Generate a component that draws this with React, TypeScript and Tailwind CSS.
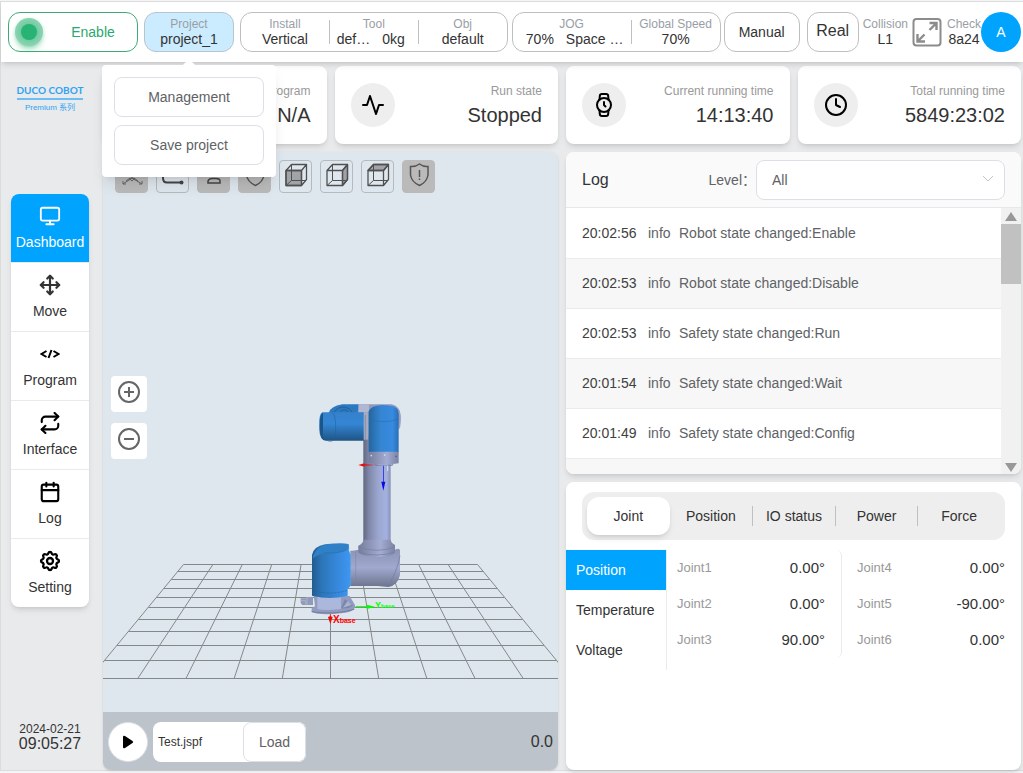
import { useState } from 'react';
import type { ReactNode } from 'react';
import { FiActivity, FiCalendar, FiClock, FiMonitor, FiMove, FiRepeat, FiWatch } from 'react-icons/fi';
import { TbSettings } from 'react-icons/tb';

const navItems = [
  { name: 'Dashboard', icon: <FiMonitor size={22} /> },
  { name: 'Move', icon: <FiMove size={22} color="#333" strokeWidth={2.4} /> },
  { name: 'Program', icon: <CodeIcon /> },
  { name: 'Interface', icon: <FiRepeat size={22} color="#000" strokeWidth={2.3} /> },
  { name: 'Log', icon: <FiCalendar size={22} color="#000" strokeWidth={2.3} /> },
  { name: 'Setting', icon: <TbSettings size={24} color="#000" strokeWidth={2.3} /> },
];

const logs = [
  { time: '20:02:56', level: 'info', message: 'Robot state changed:Enable' },
  { time: '20:02:53', level: 'info', message: 'Robot state changed:Disable' },
  { time: '20:02:53', level: 'info', message: 'Safety state changed:Run' },
  { time: '20:01:54', level: 'info', message: 'Safety state changed:Wait' },
  { time: '20:01:49', level: 'info', message: 'Safety state changed:Config' },
  { time: '', level: '', message: '' },
];

const tabs = ['Joint', 'Position', 'IO status', 'Power', 'Force'];
const metrics = ['Position', 'Temperature', 'Voltage'];

const jointColumns = [
  [
    ['Joint1', '0.00°'],
    ['Joint2', '0.00°'],
    ['Joint3', '90.00°'],
  ],
  [
    ['Joint4', '0.00°'],
    ['Joint5', '-90.00°'],
    ['Joint6', '0.00°'],
  ],
];

// perspective floor grid
const gridRows = [564, 571, 579, 588, 597, 607, 619, 631, 645, 660, 678];
const gridCols = [-5, -4, -3, -2, -1, 0, 1, 2, 3, 4, 5];

function CodeIcon() {
  return (
    <svg width="20" height="20" viewBox="0 0 20 20" fill="none" stroke="#000" strokeWidth="2">
      <path d="M6.500 7 1.500 10 6.500 13M13.500 7 18.500 10 13.500 13M11.500 6 8.500 14" />
    </svg>
  );
}

function ExpandIcon() {
  return (
    <svg width="30" height="30" viewBox="0 0 30 30" fill="none" stroke="#8c8c8c" strokeWidth="2">
      <rect x="1.5" y="2" width="27" height="26.5" rx="3" />
      <path d="M17.500 13 24 6.500M17.500 6H24.500V13M12.500 17.500 6 24M5.500 17V24.500H13" strokeWidth="2.400" />
    </svg>
  );
}

function ShieldIcon({ mark }: { mark?: boolean }) {
  return (
    <svg width="24" height="24" viewBox="0 0 24 24" fill="none" stroke="#555" strokeWidth="1.5">
      <path d="M3.500 3.500Q8.500 4 12.500 1Q16.500 4 21 3.500V12Q20 19 12.500 22.500Q4.500 19 3.500 12Z" />
      {mark && <path d="M12.500 7V14M12.500 15.500V17" />}
    </svg>
  );
}

function CubeIcon({ face }: { face: 'front' | 'right' | 'top' }) {
  return (
    <svg width="24" height="24" viewBox="0 0 24 24" fill="none" stroke="#505050" strokeWidth="1.3" strokeLinejoin="round">
      {face === 'front' && <path d="M2 7.500H17.500V22.500H2Z" fill="#a0a4a8" />}
      {face === 'right' && <path d="M17.500 7.500 22.500 1.500V16.500L17.500 22.500Z" fill="#a0a4a8" />}
      {face === 'top' && <path d="M2 7.500 7.500 1.500H22.500L17.500 7.500Z" fill="#a0a4a8" />}
      <path d="M2 7.500H17.500V22.500H2ZM2 7.500 7.500 1.500H22.500V16.500L17.500 22.500M17.500 7.500 22.500 1.500" />
      <path d="M7.500 1.500V17.500H22M7.500 17.500 2 22.500" strokeWidth="1" />
    </svg>
  );
}

function AxesIcon() {
  return (
    <svg width="24" height="24" viewBox="0 0 24 24" fill="none" stroke="#666" strokeWidth="1">
      <path d="M12 3V15L3 21M12 15 22 21M6 18Q12 12 18 18M9 15 12 18 15 15M3 18V21H6M19 21H22V18" />
    </svg>
  );
}

function PathIcon() {
  return (
    <svg width="24" height="24" viewBox="0 0 24 24" fill="none" stroke="#444" strokeWidth="2">
      <path d="M20 4H6Q2 4 2 8V15Q2 19.500 6 19.500H20" />
      <circle cx="20.500" cy="19.500" r="2" fill="#444" stroke="none" />
    </svg>
  );
}

function LoadIcon() {
  return (
    <svg width="24" height="24" viewBox="0 0 24 24" fill="none" stroke="#444" strokeWidth="1.500">
      <path d="M12 3V13M6 20V18Q7 15.500 10 15.500H14Q18 15.500 18 18V20Z" />
    </svg>
  );
}

function Field({ label, children }: { label: string; children: ReactNode }) {
  return (
    <div className="flex min-w-0 flex-col justify-center text-center">
      <div className="text-xs leading-[15px] whitespace-nowrap text-[#999ea6]">{label}</div>
      <div className="text-sm leading-[15px] whitespace-nowrap text-[#333]">{children}</div>
    </div>
  );
}

function Separator() {
  return <div className="h-6 w-px shrink-0 self-center bg-[#c0c0c0]" />;
}

function StatCard({ icon, label, value }: { icon: ReactNode; label: string; value: string }) {
  return (
    <div className="flex h-[78px] items-center justify-between rounded-lg bg-white px-4 shadow-md">
      <div className="flex size-11 items-center justify-center rounded-full bg-[#eee] text-black">{icon}</div>
      <div className="text-right">
        <div className="text-xs leading-5 text-[#999]">{label}</div>
        <div className="text-xl leading-7 text-[#333]">{value}</div>
      </div>
    </div>
  );
}

function Header() {
  const [open, setOpen] = useState(true);

  return (
    <header className="relative z-10 flex h-[61px] shrink-0 items-center border-t border-[#dcdcdc] bg-white pr-0.5 pl-[7px] shadow-md">
      <button type="button" className="flex h-10 w-[130px] shrink-0 items-center rounded-xl border border-[#3fa978] pl-1.5 text-sm text-[#2ba86f]">
        <span className="flex size-7 items-center justify-center rounded-full bg-[#8fd4b3] shadow-md shadow-[#2db574]/40">
          <span className="size-4 rounded-full bg-[#27b373] shadow-[0_0_6px_2px_#5fc698]" />
        </span>
        <span className="flex-1 pl-1.5 text-center">Enable</span>
      </button>

      <div className="relative ml-1.5 shrink-0">
        <button
          type="button"
          aria-expanded={open}
          onClick={() => setOpen(!open)}
          className="flex h-10 w-[90px] flex-col justify-center rounded-xl border border-[#b9c5ce] bg-[#cbebff]"
        >
          <span className="w-full text-xs leading-[15px] text-[#999ea6]">Project</span>
          <span className="w-full text-sm leading-[15px] text-[#333]">project_1</span>
        </button>
        {open && (
          <div className="absolute top-[53px] left-1/2 flex w-[174px] -translate-x-1/2 flex-col gap-2 rounded bg-white p-3 shadow-lg">
            <span className="absolute -top-1 left-1/2 size-2.5 -translate-x-1/2 rotate-45 bg-white" />
            <button type="button" className="h-10 rounded-lg border border-[#dcdfe6] text-sm text-[#606266]">Management</button>
            <button type="button" className="h-10 rounded-lg border border-[#dcdfe6] text-sm text-[#606266]">Save project</button>
          </div>
        )}
      </div>

      <div className="ml-1.5 flex h-10 min-w-0 flex-1 rounded-xl border border-[#bfbfbf]">
        <div className="grid flex-1"><Field label="Install">Vertical</Field></div>
        <Separator />
        <div className="grid flex-1">
          <Field label="Tool">
            <div className="flex justify-center gap-3 pr-1.5">
              <span>def…</span>
              <span>0kg</span>
            </div>
          </Field>
        </div>
        <Separator />
        <div className="grid flex-1"><Field label="Obj">default</Field></div>
      </div>

      <div className="ml-1 flex h-10 w-[209px] shrink-0 rounded-xl border border-[#bfbfbf]">
        <div className="grid flex-1">
          <Field label="JOG">
            <div className="flex justify-center gap-3 pl-1.5">
              <span>70%</span>
              <span>Space …</span>
            </div>
          </Field>
        </div>
        <Separator />
        <div className="grid w-[88px]"><Field label="Global Speed">70%</Field></div>
      </div>

      <button type="button" className="ml-[3px] h-10 w-[76px] shrink-0 rounded-xl border border-[#bfbfbf] text-sm text-[#333]">Manual</button>
      <button type="button" className="ml-[7px] h-10 w-[52px] shrink-0 rounded-xl border border-[#bfbfbf] pb-0.5 text-base text-[#333]">Real</button>
      <div className="ml-1 shrink-0"><Field label="Collision">L1</Field></div>
      <button type="button" aria-label="Full screen" className="ml-1 shrink-0"><ExpandIcon /></button>
      <div className="ml-[5px] shrink-0"><Field label="Check">8a24</Field></div>
      <button type="button" className="size-10 shrink-0 rounded-full bg-[#00a4ff] text-sm text-white">A</button>
    </header>
  );
}

function Sidebar() {
  const [active, setActive] = useState('Dashboard');

  return (
    <aside className="flex w-[102px] shrink-0 flex-col items-start pl-2.5">
      <div className="mt-5 flex w-[78px] flex-col items-center">
        <div className="font-['Lato',sans-serif] text-[10px] leading-4 font-bold whitespace-nowrap text-[#2ea3f2]">DUCO COBOT</div>
        <div className="h-0.5 w-[66px] bg-[#6cbdf3]" />
        <div className="text-[8px] leading-4 text-[#2ea3f2]">Premium 系列</div>
      </div>

      <nav className="mt-[78px] w-[78px] overflow-hidden rounded-lg bg-white shadow-md">
        {navItems.map(item => (
          <a
            key={item.name}
            href={`#${item.name.toLowerCase()}`}
            onClick={() => setActive(item.name)}
            className={`flex flex-col items-center gap-1.5 border-b border-[#eaeaea] pt-3 pb-2.5 text-sm last:border-b-0 ${
              active === item.name ? 'bg-[#00a4ff] text-white' : 'text-[#333]'
            }`}
          >
            <span className="flex h-5 items-center">{item.icon}</span>
            {item.name}
          </a>
        ))}
      </nav>

      <div className="mt-auto w-[78px] pb-[18px] text-center text-[#333]">
        <div className="text-xs leading-[14px]">2024-02-21</div>
        <div className="text-base leading-4">09:05:27</div>
      </div>
    </aside>
  );
}

function RobotScene() {
  return (
    <svg className="block size-full" viewBox="103 152 455 560" preserveAspectRatio="xMidYMid slice">
      <defs>
        <linearGradient id="tube">
          <stop offset="0" stopColor="#60677f" />
          <stop offset=".2" stopColor="#7f87a8" />
          <stop offset=".55" stopColor="#9ca7d0" />
          <stop offset=".85" stopColor="#a4b1e0" />
          <stop offset="1" stopColor="#8790b5" />
        </linearGradient>
        <linearGradient id="blueX">
          <stop offset="0" stopColor="#205b90" />
          <stop offset=".25" stopColor="#2c76b8" />
          <stop offset=".7" stopColor="#378ade" />
          <stop offset="1" stopColor="#3e97f0" />
        </linearGradient>
        <linearGradient id="wrist">
          <stop offset="0" stopColor="#24659f" />
          <stop offset=".4" stopColor="#3585d2" />
          <stop offset=".8" stopColor="#378ae0" />
          <stop offset="1" stopColor="#2a6fb4" />
        </linearGradient>
        <linearGradient id="blueY" x2="0" y2="1">
          <stop offset="0" stopColor="#3581cb" />
          <stop offset=".4" stopColor="#3486d5" />
          <stop offset="1" stopColor="#1f5483" />
        </linearGradient>
        <linearGradient id="elbow" x2="0" y2="1">
          <stop offset="0" stopColor="#8b93b5" />
          <stop offset=".5" stopColor="#a0a9ce" />
          <stop offset="1" stopColor="#6c738d" />
        </linearGradient>
        <linearGradient id="ring">
          <stop offset="0" stopColor="#757d9c" />
          <stop offset=".6" stopColor="#a3acd2" />
          <stop offset="1" stopColor="#7b83a3" />
        </linearGradient>
      </defs>

      <g stroke="#858888" strokeWidth="1">
        {gridRows.map(y => {
          const half = 147 + ((y - 564) * 93.5) / 114;
          return <path key={y} d={`M${330.5 - half} ${y + 0.5}H${330.5 + half}`} />;
        })}
        {gridCols.map(i => (
          <path key={i} d={`M${330.5 + i * 29.4} 564.5L${330.5 + i * 48.1} 678`} />
        ))}
      </g>

      <g transform="translate(295 395) scale(0.3333)">
        {/* shoulder and forearm behind the wrist */}
        <path d="M188 28H290Q316 34 317 62Q317 92 308 108L205 137Z" fill="#9199bd" />
        <path d="M190 28H222V52H190Z" fill="#b0b7d2" />
        <path d="M101 54Q106 34 142 28H190V54Z" fill="#2c79bf" />
        <path d="M118 51Q128 36 148 36Q164 38 172 52M136 49Q148 40 160 50" fill="none" stroke="#205f9b" strokeWidth="3" />

        <path d="M205 120H287V442H205Z" fill="url(#tube)" />
        <path d="M204 52H220V134H204Z" fill="#a6abc2" />
        <path d="M211 60V134" stroke="#777f9b" strokeWidth="2" />
        <path d="M84 52H206V137H92Q74 134 73 104V76Q74 54 84 52Z" fill="url(#blueY)" />
        <path d="M84 52Q73 60 74 95Q75 132 88 136L84 126V62Z" fill="#1b568b" />
        <path d="M112 52Q122 60 122 94Q122 130 112 138Q104 142 96 136" fill="none" stroke="#1f5f9c" strokeWidth="1.5" />

        {/* wrist */}
        <path d="M221 48Q228 32 262 30Q304 30 311 48V172H221Z" fill="url(#wrist)" />
        <path d="M221 72Q266 88 311 72" fill="none" stroke="#276aaa" strokeWidth="1.5" />
        <path d="M311 46Q319 64 313 100" fill="none" stroke="#9ba4c4" strokeWidth="4" />
        <path d="M221 170H311V205Q266 212 221 205Z" fill="url(#ring)" />
        <path d="M238 207Q266 216 296 207L292 212H242Z" fill="#737b9b" />
        <circle cx="229" cy="182" r="2.500" fill="#d5daef" />
        <circle cx="269" cy="180" r="2.500" fill="#e4e8f6" />
        <circle cx="303" cy="184" r="2.500" fill="#575e79" />
        <path d="M190 210 208 205V208L242 210 208 212V215Z" fill="#f00808" />
        <path d="M278 212V228" stroke="#dce2f4" strokeWidth="3" />
        <path d="M264 212V260H259L265 287 271 260H266V212Z" fill="#0808ee" />

        {/* upper arm joint */}
        <path d="M166 467Q176 468 190 464H300Q314 458 315 466V540Q308 572 280 576L248 573H166Z" fill="url(#elbow)" />
        <path d="M315 482Q306 530 286 560" fill="none" stroke="#717897" strokeWidth="2" />
        <path d="M182 467V573" stroke="#7c84a3" strokeWidth="1.5" />
        <path d="M205 434H287Q287 442 300 450V470Q296 486 246 486Q198 484 190 472V452Q205 444 205 434Z" fill="url(#ring)" />
        <path d="M190 456Q245 476 300 456M192 472Q245 488 298 472" fill="none" stroke="#747d9e" strokeWidth="2" />

        {/* base */}
        <path d="M17 610H36V606H54V630H22L17 624Z" fill="#919bb8" />
        <path d="M17 617H32V628M36 606V630" fill="none" stroke="#a9b3cd" strokeWidth="3" />
        <path d="M56 603H164L180 630Q184 650 140 655Q74 662 50 651V640L60 634Z" fill="#929cc0" />
        <path d="M67 603H138V642Q90 648 67 642Z" fill="#acb7dc" />
        <path d="M138 640 150 612 174 632Q160 642 138 640Z" fill="#7c86a8" />
        <path d="M144 638 158 618 170 630Z" fill="#a7b2d5" />
        <path d="M50 650Q115 661 178 643" fill="none" stroke="#717b9c" strokeWidth="3" />
        <path d="M51 480Q56 454 90 448Q140 442 161 447V464L167 480V572L158 582V602Q106 616 51 602Z" fill="url(#blueX)" />
        <path d="M54 484Q64 452 104 448Q150 444 161 449V460Q142 474 112 474Q76 472 54 490Z" fill="#3080c8" />
        <path d="M86 474Q144 476 163 460" fill="none" stroke="#2565a0" strokeWidth="1.5" />
        <path d="M51 586Q106 602 158 586" fill="none" stroke="#225f96" strokeWidth="1.5" strokeDasharray="8 3" />

        <path d="M182 635H220" stroke="#0f0" strokeWidth="3" />
        <path d="M216 629 240 635 216 642Z" fill="#0f0" />
        <path d="M106 658V668" stroke="#f00" strokeWidth="2" />
        <path d="M99 666Q106 661 113 666L106 687Z" fill="#e80808" />
      </g>
      <text x="333" y="623" fontSize="10" fontWeight="bold" fill="#f00">
        X<tspan fontSize="7">base</tspan>
      </text>
      <text x="375" y="608" fontSize="9" fontWeight="bold" fill="#0f0">
        Y<tspan fontSize="6">base</tspan>
      </text>
    </svg>
  );
}

function Viewer() {
  const views = [
    { name: 'Axes', icon: <AxesIcon />, filled: true },
    { name: 'Path', icon: <PathIcon />, filled: false },
    { name: 'Payload', icon: <LoadIcon />, filled: true },
    { name: 'Safety', icon: <ShieldIcon />, filled: true },
    { name: 'Front view', icon: <CubeIcon face="front" />, filled: false },
    { name: 'Right view', icon: <CubeIcon face="right" />, filled: false },
    { name: 'Top view', icon: <CubeIcon face="top" />, filled: false },
    { name: 'Safety planes', icon: <ShieldIcon mark />, filled: true },
  ];

  return (
    <section className="flex min-h-0 flex-col overflow-hidden rounded-lg bg-[#dfe7ee] shadow-sm">
      <div className="relative min-h-0 flex-1">
        <div className="absolute inset-0">
          <RobotScene />
        </div>
        <div className="absolute top-2 left-3 flex gap-2">
          {views.map(view => (
            <button
              key={view.name}
              type="button"
              aria-label={view.name}
              className={`flex size-[33px] items-center justify-center rounded-sm border pb-1 ${
                view.filled ? 'border-[#bababa] bg-[#bababa]' : 'border-[#b5babd]'
              }`}
            >
              {view.icon}
            </button>
          ))}
        </div>
        <div className="absolute top-56 left-2 flex flex-col gap-[11px]">
          <button type="button" aria-label="Zoom in" className="flex size-9 justify-center rounded bg-white pt-1">
            <svg width="24" height="24" viewBox="0 0 24 24" fill="none" stroke="#666" strokeWidth="2">
              <circle cx="12" cy="12" r="10" />
              <path d="M7 12H17M12 7V17" />
            </svg>
          </button>
          <button type="button" aria-label="Zoom out" className="flex size-9 justify-center rounded bg-white pt-1">
            <svg width="24" height="24" viewBox="0 0 24 24" fill="none" stroke="#666" strokeWidth="2">
              <circle cx="12" cy="12" r="10" />
              <path d="M7 12H17" />
            </svg>
          </button>
        </div>
      </div>

      <div className="flex h-[58px] shrink-0 items-center bg-[#bcc3ca] px-[5px] pt-0.5">
        <button type="button" aria-label="Play" className="flex size-10 items-center justify-center rounded-full border border-[#dcdfe6] bg-white">
          <svg width="14" height="14" viewBox="0 0 14 14">
            <path d="M2 2Q2 0 4 1L11.500 6Q13 7 11.500 8L4 13Q2 14 2 12Z" fill="#000" />
          </svg>
        </button>
        <div className="ml-[5px] flex h-10 w-[153px] overflow-hidden rounded-lg bg-white">
          <input aria-label="Program file" defaultValue="Test.jspf" className="w-[90px] pl-[5px] text-xs text-[#333] outline-none" />
          <button type="button" className="flex-1 rounded-lg border border-[#dcdfe6] bg-white text-sm text-[#606266]">Load</button>
        </div>
        <span className="ml-auto text-base text-[#333]">0.0</span>
      </div>
    </section>
  );
}

function LogPanel() {
  return (
    <section className="flex min-h-0 flex-1 flex-col overflow-hidden rounded-lg bg-white shadow-md">
      <div className="flex h-14 shrink-0 items-center border-b border-[#e8e8e8] bg-[#fafafa] px-4">
        <h2 className="text-base text-[#333]">Log</h2>
        <label htmlFor="level" className="ml-auto text-sm text-[#606266]">Level：</label>
        <div className="relative w-[249px]">
          <select id="level" className="h-10 w-full appearance-none rounded-lg border border-[#dcdfe6] bg-white px-[15px] text-sm text-[#606266]">
            <option>All</option>
            <option>Info</option>
            <option>Warning</option>
            <option>Error</option>
          </select>
          <svg className="pointer-events-none absolute top-3 right-2.5" width="14" height="14" viewBox="0 0 14 14" fill="none" stroke="#c0c4cc">
            <path d="M2 4 7 9 12 4" />
          </svg>
        </div>
      </div>

      <div className="flex min-h-0 flex-1">
        <div className="min-w-0 flex-1 overflow-hidden">
          <table className="w-full text-left text-sm text-[#606266]">
            <tbody>
              {logs.map((log, i) => (
                <tr key={i} className="h-[50px] border-b border-[#ebebeb] even:bg-[#f7f7f7]">
                  <td className="w-[82px] pl-4 text-[#404040]">{log.time}</td>
                  <td className="w-[31px]">{log.level}</td>
                  <td>{log.message}</td>
                </tr>
              ))}
            </tbody>
          </table>
        </div>
        <div className="flex w-5 shrink-0 flex-col bg-[#f1f1f1]">
          <svg width="20" height="16" viewBox="0 0 20 16">
            <path d="M4 13 10 4 16 13Z" fill="#989898" />
          </svg>
          <div className="h-[60px] bg-[#c1c1c1]" />
          <svg className="mt-auto" width="20" height="15" viewBox="0 0 20 15">
            <path d="M4 4 10 13 16 4Z" fill="#989898" />
          </svg>
        </div>
      </div>
    </section>
  );
}

function JointPanel() {
  const [tab, setTab] = useState('Joint');
  const [metric, setMetric] = useState('Position');

  return (
    <section className="h-72 shrink-0 rounded-lg bg-white pt-2.5 shadow-md">
      <div className="mx-4 flex h-12 rounded-xl bg-[#eee] p-[5px]">
        {tabs.map((name, i) => (
          <div key={name} className="flex flex-1 items-center">
            {i > 1 && <div className="h-5 w-px bg-[#c0c0c0]" />}
            <button
              type="button"
              onClick={() => setTab(name)}
              className={`h-full flex-1 rounded-xl text-sm whitespace-nowrap text-[#333] ${tab === name ? 'bg-white shadow-md' : ''}`}
            >
              {name}
            </button>
          </div>
        ))}
      </div>

      <div className="mt-2.5 flex items-start">
        <div className="flex w-[101px] flex-col border-r border-[#ebebeb]">
          {metrics.map(name => (
            <button
              key={name}
              type="button"
              onClick={() => setMetric(name)}
              className={`h-10 pl-2.5 text-left text-sm ${metric === name ? 'bg-[#00a4ff] text-white' : 'text-[#333]'}`}
            >
              {name}
            </button>
          ))}
        </div>
        <div className="flex flex-1">
          {jointColumns.map((joints, i) => (
            <dl key={i} className="flex-1 rounded-md pr-4 pl-2.5 first:border-r first:border-[#ebebeb] last:pl-[15px]">
              {joints.map(([name, value]) => (
                <div key={name} className="flex h-9 items-center justify-between">
                  <dt className="text-[13px] text-[#999]">{name}</dt>
                  <dd className="text-[15px] text-[#333]">{value}</dd>
                </div>
              ))}
            </dl>
          ))}
        </div>
      </div>
    </section>
  );
}

export default function App() {
  return (
    <div className="h-screen min-h-[700px] bg-[#f4f5f6] pt-px pb-0.5 font-['Liberation_Sans','Noto_Sans_CJK_SC',sans-serif]">
      <div className="flex h-full flex-col border-b border-l border-[#dcdcdc] bg-[#e9eaec]">
        <Header />
        <div className="flex min-h-0 flex-1">
          <Sidebar />
          <main className="flex min-w-0 flex-1 flex-col gap-2 pt-1 pr-0.5">
            <div className="grid shrink-0 grid-cols-4 gap-2">
              <StatCard icon={null} label="Program" value="N/A" />
              <StatCard icon={<FiActivity size={24} />} label="Run state" value="Stopped" />
              <StatCard icon={<FiWatch size={24} />} label="Current running time" value="14:13:40" />
              <StatCard icon={<FiClock size={24} />} label="Total running time" value="5849:23:02" />
            </div>
            <div className="grid min-h-0 flex-1 grid-cols-2 gap-2">
              <Viewer />
              <div className="flex min-h-0 flex-col gap-2">
                <LogPanel />
                <JointPanel />
              </div>
            </div>
          </main>
        </div>
      </div>
    </div>
  );
}
